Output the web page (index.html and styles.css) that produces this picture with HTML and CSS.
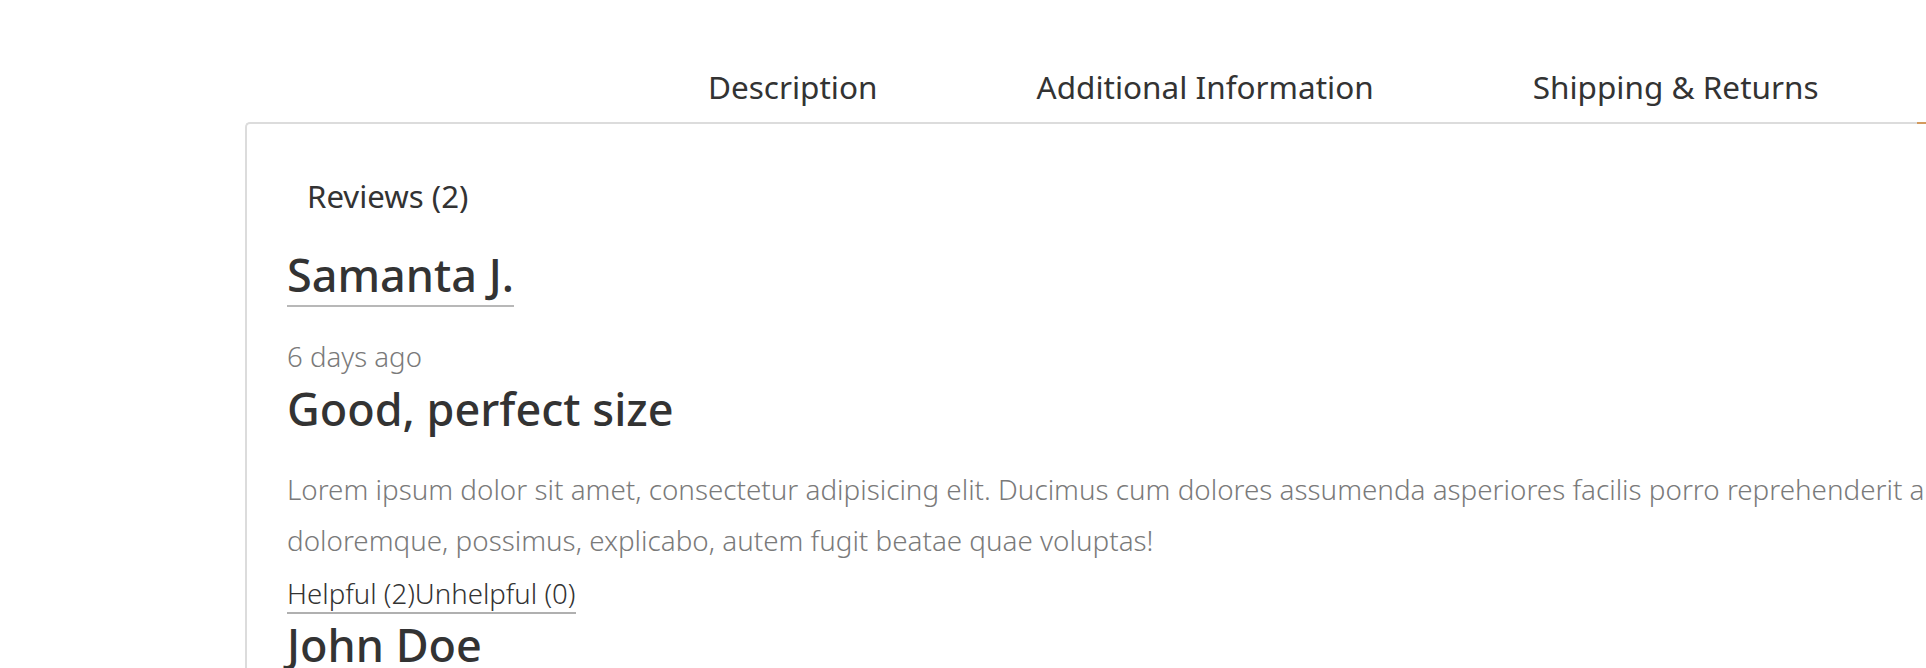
FILE: index.html
```html
<!DOCTYPE html>
<html lang="en">
<head>
<meta charset="utf-8">
<title>Product tabs</title>
<link rel="stylesheet" href="styles.css">
</head>
<body>
<div class="product-tabs">
  <nav class="tab-nav">
    <a class="tab-link" href="#">Description</a>
    <a class="tab-link" href="#">Additional Information</a>
    <a class="tab-link" href="#">Shipping &amp; Returns</a>
  </nav>
  <div class="tab-panel">
    <div class="panel-tab">Reviews (2)</div>
    <div class="review">
      <div class="review-author"><a href="#">Samanta J.</a></div>
      <div class="review-date">6 days ago</div>
      <h3 class="review-title">Good, perfect size</h3>
      <p class="review-text">Lorem ipsum dolor sit amet, consectetur adipisicing elit. Ducimus cum dolores assumenda asperiores facilis porro reprehenderit animi culpa atque blanditiis commodi perspiciatis<br>doloremque, possimus, explicabo, autem fugit beatae quae voluptas!</p>
      <div class="review-actions"><a href="#">Helpful (2)</a><a href="#">Unhelpful (0)</a></div>
    </div>
    <div class="review">
      <div class="review-author plain">John Doe</div>
    </div>
  </div>
</div>
</body>
</html>
```
FILE: styles.css
```css
html, body {
  margin: 0;
  padding: 0;
  background: #fff;
  overflow: hidden;
}
body {
  font-family: "Noto Sans", "Open Sans", "Liberation Sans", sans-serif;
  color: #333;
  width: 1926px;
  height: 668px;
}
a {
  color: inherit;
  text-decoration: none;
}
.product-tabs {
  margin-left: 245px;
  width: 2400px;
}
.tab-nav {
  display: flex;
  gap: 159px;
  padding: 67px 0 15px 463px;
}
.tab-link {
  font-size: 31.5px;
  line-height: 40px;
  color: #333;
}
.tab-panel {
  position: relative;
  border-top: 2px solid #dcdcdc;
  border-left: 2px solid #dcdcdc;
  border-top-left-radius: 5px;
  padding: 52px 0 0 40px;
}
.tab-panel::after {
  content: "";
  position: absolute;
  top: -2px;
  left: 1670px;
  width: 30px;
  height: 2px;
  background: #d39a5e;
}
.panel-tab {
  font-size: 31.2px;
  line-height: 40px;
  padding-left: 20px;
  margin-bottom: 28px;
}
.review-author {
  font-size: 45px;
  font-weight: 500;
  line-height: normal;
}
.review-author a {
  display: inline-block;
  border-bottom: 2px solid #b8b8b8;
}
.review-author.plain {
  line-height: 62px;
}
.review-date {
  margin-top: 30px;
  font-size: 27.6px;
  font-weight: 300;
  color: #7a7a7a;
  line-height: normal;
}
.review-title {
  margin: 2.5px 0 0;
  font-size: 45px;
  font-weight: 500;
  line-height: normal;
}
.review-text {
  margin: 25px 0 0;
  font-size: 27.8px;
  font-weight: 300;
  color: #7a7a7a;
  line-height: 51px;
  white-space: nowrap;
}
.review-actions {
  display: inline-flex;
  margin-top: 8px;
  font-size: 27.6px;
  font-weight: 300;
  line-height: normal;
  border-bottom: 2px solid #b0b0b0;
}
```
